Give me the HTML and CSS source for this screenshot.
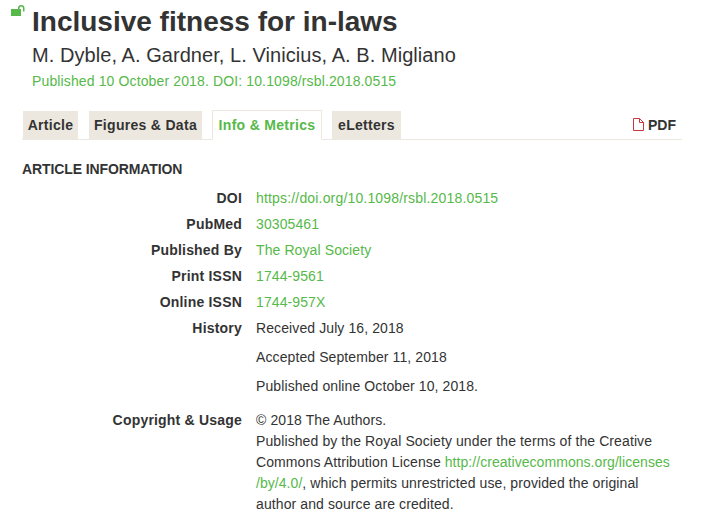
FILE: index.html
```html
<!DOCTYPE html>
<html lang="en">
<head>
<meta charset="utf-8">
<title>Inclusive fitness for in-laws</title>
<link rel="stylesheet" href="styles.css">
</head>
<body>
<main class="page">
  <header class="head">
    <svg class="lock" width="14" height="12" viewBox="0 0 14 12" aria-hidden="true">
      <rect x="0" y="4" width="10" height="7" fill="#56b949"/>
      <path d="M7.75 4.5V3.25a2.5 2.5 0 0 1 5 0V6.5" fill="none" stroke="#56b949" stroke-width="1.5"/>
    </svg>
    <h1 class="title">Inclusive fitness for in-laws</h1>
    <p class="authors">M. Dyble, A. Gardner, L. Vinicius, A. B. Migliano</p>
    <p class="pub">Published 10 October 2018. DOI: 10.1098/rsbl.2018.0515</p>
  </header>
  <nav class="tabs">
    <a class="tab tab-article">Article</a>
    <a class="tab tab-figures">Figures &amp; Data</a>
    <a class="tab tab-info active">Info &amp; Metrics</a>
    <a class="tab tab-eletters">eLetters</a>
    <a class="pdf">
      <svg width="11" height="13" viewBox="0 0 11 13" aria-hidden="true">
        <path d="M.5.5H6.5L10.5 4.5V12.5H.5Z M6.5.5V4.5H10.5" fill="#fff" stroke="#c8383c"/>
      </svg>
      PDF
    </a>
  </nav>
  <h2 class="section">ARTICLE INFORMATION</h2>
  <dl class="info">
    <dt>DOI</dt><dd><a class="doi">https://doi.org/10.1098/rsbl.2018.0515</a></dd>
    <dt>PubMed</dt><dd><a>30305461</a></dd>
    <dt>Published By</dt><dd><a>The Royal Society</a></dd>
    <dt>Print ISSN</dt><dd><a>1744-9561</a></dd>
    <dt>Online ISSN</dt><dd><a>1744-957X</a></dd>
    <dt>History</dt>
    <dd>
      <div class="hist">Received July 16, 2018</div>
      <div class="hist">Accepted September 11, 2018</div>
      <div class="hist">Published online October 10, 2018.</div>
    </dd>
    <dt class="gap">Copyright &amp; Usage</dt>
    <dd class="gap copy">© 2018 The Authors.<br>Published by the Royal Society under the terms of the Creative<br>Commons Attribution License <a class="cc">http://creativecommons.org/licenses<br>/by/4.0/</a>, which permits unrestricted use, provided the original<br>author and source are credited.</dd>
  </dl>
</main>
</body>
</html>
```
FILE: styles.css
```css
* { box-sizing: border-box; }
html, body { margin: 0; padding: 0; background: #fff; }
body { font-family: "Liberation Sans", Arial, sans-serif; color: #333; overflow: hidden; height: 526px; }
.page { width: 660px; margin-left: 22px; }
.head { position: relative; padding: 6px 0 0 10px; height: 110px; }
.lock { position: absolute; left: -11px; top: 5px; }
.title { margin: 0; font-size: 28px; line-height: 32px; font-weight: 700; color: #333; }
.authors { margin: 5px 0 0; font-size: 20px; line-height: 24px; color: #333; letter-spacing: .06px; }
.pub { margin: 4px 0 0; font-size: 14px; line-height: 20px; color: #56b949; letter-spacing: .13px; }
.tabs { display: flex; align-items: flex-end; height: 30px; border-bottom: 1px solid #ede8df; }
.tab { height: 28px; background: #ede8df; font-size: 14px; font-weight: 700; line-height: 29px; color: #333; letter-spacing: .3px; text-align: center; white-space: nowrap; }
.tab-article { width: 55px; margin-left: 1px; margin-right: 11px; }
.tab-figures { width: 113px; margin-right: 10px; }
.tab-info { width: 110px; margin-right: 10px; }
.tab-eletters { width: 69px; }
.tab.active { height: 30px; margin-bottom: -1px; background: #fff; border: 1px solid #ede8df; border-bottom-color: #fff; color: #56b949; }
.pdf { display: flex; align-items: center; gap: 4px; margin-left: auto; margin-right: 6px; height: 29px; font-size: 14px; font-weight: 700; color: #333; }
.section { margin: 19px 0 0; font-size: 14px; line-height: 20px; font-weight: 700; color: #333; letter-spacing: -.1px; }
.info { display: grid; grid-template-columns: 220px 1fr; column-gap: 14px; margin: 7px 0 0; font-size: 14px; line-height: 21px; letter-spacing: .1px; }
.info dt { font-weight: 700; text-align: right; padding: 2px 0 3px; letter-spacing: .2px; }
.info dd { margin: 0; padding: 2px 0 3px; }
.info a { color: #56b949; }
.info a.doi { letter-spacing: .17px; }
.info a.cc { letter-spacing: .05px; }
.hist { margin-bottom: 8px; }
.hist:last-child { margin-bottom: 0; }
.info .gap { margin-top: 8px; padding-bottom: 0; }
```
